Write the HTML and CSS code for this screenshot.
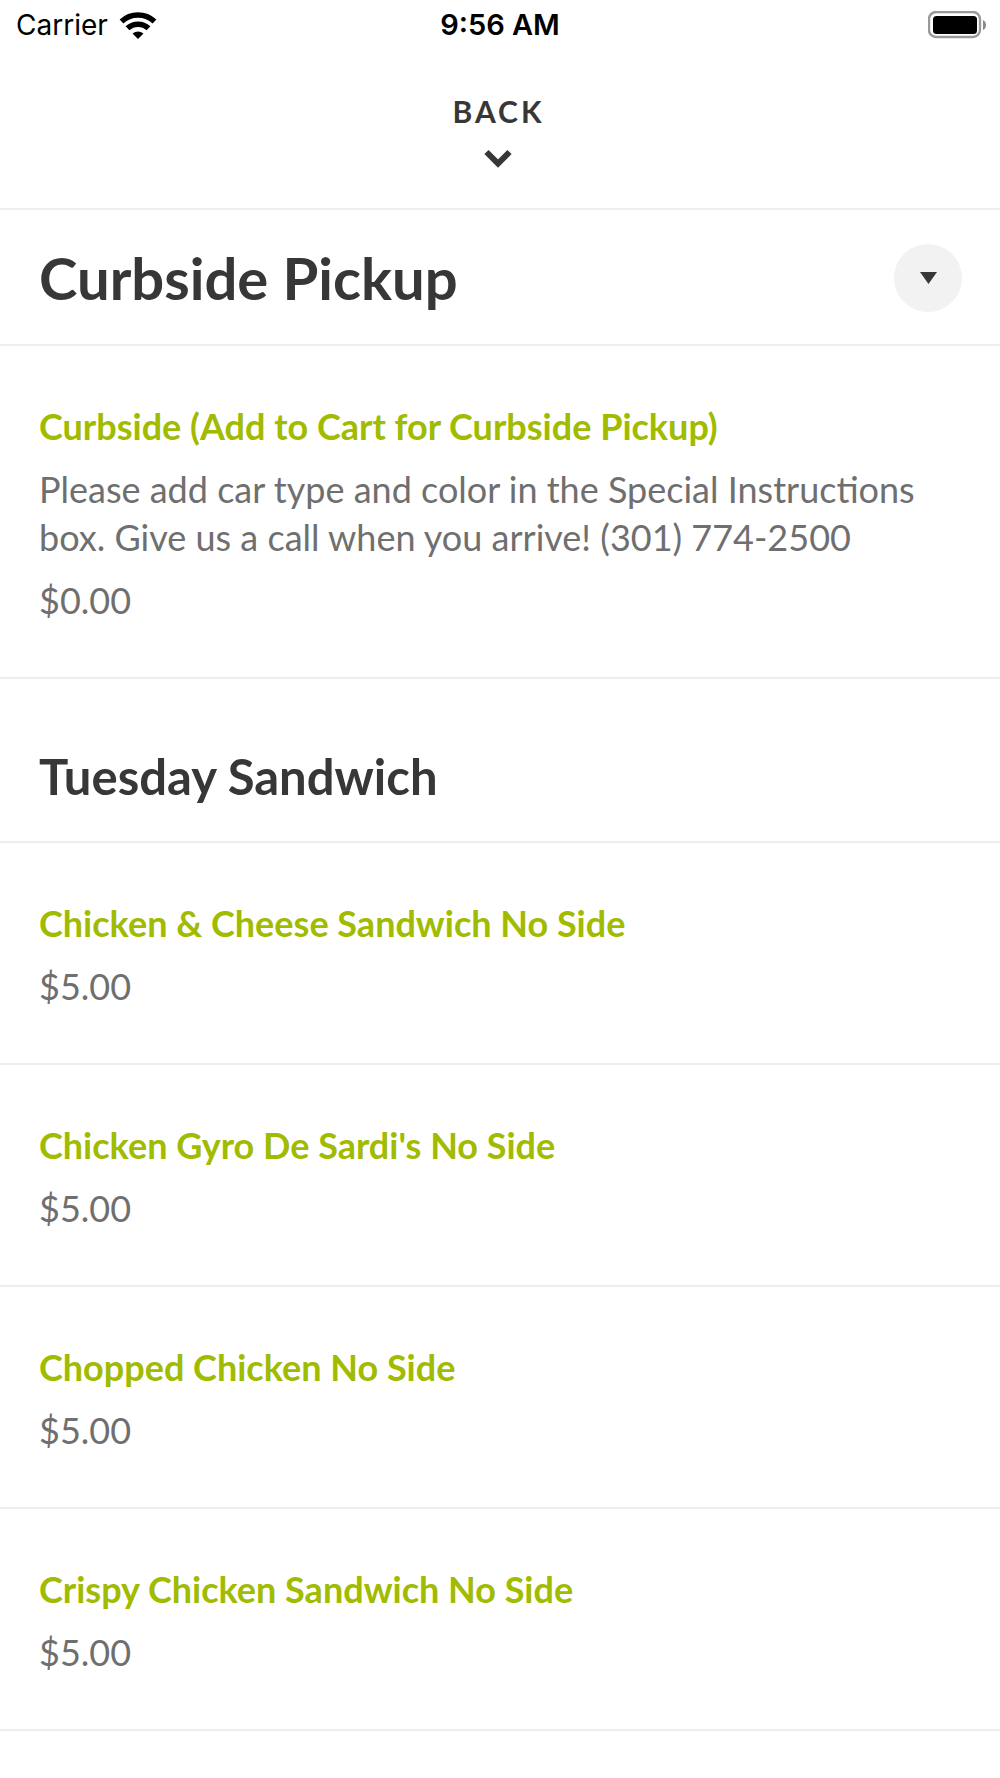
FILE: index.html
```html
<!DOCTYPE html>
<html lang="en">
<head>
<meta charset="utf-8">
<meta name="viewport" content="width=device-width, initial-scale=1">
<title>Curbside Pickup</title>
<link rel="stylesheet" href="styles.css">
</head>
<body>
<div class="status">
  <div class="carrier"><span>Carrier</span>
    <svg class="wifi" viewBox="0 0 38 28" aria-hidden="true"><g fill="none" stroke="#000" stroke-width="5.500"><path d="M2.500 10.500a24 24 0 0 1 33 0"/><path d="M8.500 17.300a15.500 15.500 0 0 1 21 0"/></g><path d="M13.500 22.500a9 9 0 0 1 11 0L19 28z"/></svg>
  </div>
  <time>9:56 AM</time>
  <svg class="battery" viewBox="0 0 58 28" aria-hidden="true"><rect x="1" y="1" width="51" height="25" rx="7" fill="none" stroke="#999" stroke-width="2.400"/><rect x="5" y="5" width="44" height="18" rx="3.500"/><path d="M55 9q3 1.500 3 5t-3 5z" fill="#888"/></svg>
</div>
<header class="top">
  <button class="back" type="button">BACK
    <svg class="chevron" viewBox="0 0 28 20" aria-hidden="true"><path d="M2.500 3L14 14.500 25.500 3" fill="none" stroke="#373737" stroke-width="6"/></svg>
  </button>
</header>
<main>
  <section>
    <div class="category">
      <h1>Curbside Pickup</h1>
      <button class="toggle" type="button" aria-label="Choose category"><svg viewBox="0 0 18 12" aria-hidden="true"><path d="M1 0h17L9.500 12z" fill="#373737"/></svg></button>
    </div>
    <article class="item">
      <h3><a href="#curbside">Curbside (Add to Cart for Curbside Pickup)</a></h3>
      <p>Please add car type and color in the Special Instructions box. Give us a call when you arrive! (301) 774-2500</p>
      <p>$0.00</p>
    </article>
  </section>
  <section>
    <h2>Tuesday Sandwich</h2>
    <article class="item"><h3><a href="#cheese">Chicken &amp; Cheese Sandwich No Side</a></h3><p>$5.00</p></article>
    <article class="item"><h3><a href="#gyro">Chicken Gyro De Sardi's No Side</a></h3><p>$5.00</p></article>
    <article class="item"><h3><a href="#chopped">Chopped Chicken No Side</a></h3><p>$5.00</p></article>
    <article class="item"><h3><a href="#crispy">Crispy Chicken Sandwich No Side</a></h3><p>$5.00</p></article>
  </section>
</main>
</body>
</html>
```

FILE: styles.css
```css
* { box-sizing: border-box; }
body { margin: 0; background: #fff; color: #373737; font-family: Lato, sans-serif; }
h1, h2, h3, p { margin: 0; }
button { border: 0; padding: 0; color: inherit; font: inherit; }
.status { display: grid; grid-template-columns: 1fr auto 1fr; align-items: center; height: 48px; padding: 0 14px; color: #000; font: 28px/50px Inter, sans-serif; }
.carrier { display: flex; align-items: center; gap: 11px; padding-left: 2px; }
.wifi { width: 38px; height: 28px; }
.status time { font-size: 29px; font-weight: 600; }
.battery { width: 58px; height: 28px; justify-self: end; }
.top { display: flex; justify-content: center; padding: 45px 3px 39px 0; border-bottom: 2px solid #eee; }
.back { display: flex; flex-direction: column; align-items: center; gap: 20px; background: none; font-size: 30px; line-height: 36px; font-weight: 700; letter-spacing: 3px; }
.chevron { width: 28px; height: 20px; }
.category { display: flex; justify-content: space-between; align-items: center; padding: 34px 38px 32px 39px; border-bottom: 2px solid #eee; }
h1 { font-size: 58px; line-height: 68px; font-weight: 700; }
.toggle { display: grid; place-items: center; width: 68px; height: 68px; border-radius: 50%; background: #f2f2f2; }
.toggle svg { width: 18px; height: 12px; }
.item { display: grid; gap: 15px; padding: 56px 39px 53px; border-bottom: 2px solid #eee; font-size: 36px; line-height: 48px; color: #6f6f6f; }
h3 { font-size: 36px; line-height: 48px; font-weight: 700; }
h3 a { color: #a0bb00; text-decoration: none; }
h2 { padding: 66px 39px 34px; border-bottom: 2px solid #eee; font-size: 49px; line-height: 62px; font-weight: 700; }
```
